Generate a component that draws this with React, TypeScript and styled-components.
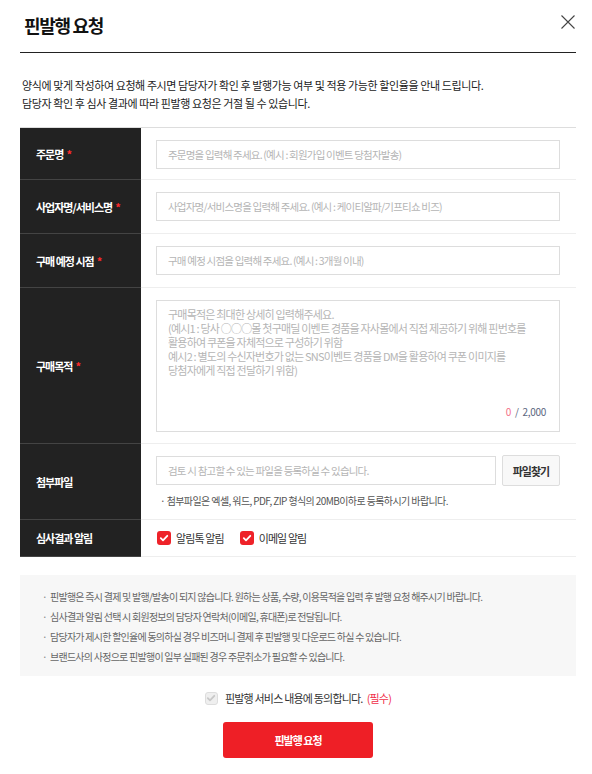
import React from "react";
import styled, { createGlobalStyle } from "styled-components";

const GlobalStyle = createGlobalStyle`
  body {
    margin: 0;
    background: #fff;
    font-family: "Noto Sans CJK KR", "Noto Sans", sans-serif;
    color: #333;
  }
  * { box-sizing: border-box; }
`;

const Modal = styled.div`
  width: 592px;
  padding: 0 16px 16px 20px;
  background: #fff;
`;

const Header = styled.header`
  height: 53px;
  display: flex;
  align-items: center;
  justify-content: space-between;
  border-bottom: 1px solid #222;
  padding: 0 0 2px 4px;
`;

const Title = styled.h1`
  margin: 0;
  font-size: 18px;
  font-weight: 700;
  letter-spacing: -1.3px;
  color: #111;
`;

const CloseButton = styled.button`
  width: 16px;
  height: 16px;
  padding: 0;
  border: 0;
  background: none;
  cursor: pointer;
  margin-top: -6px;
  display: flex;
`;

const Intro = styled.div`
  padding: 23px 0 0 2px;
  margin-bottom: 15px;
  font-size: 11px;
  line-height: 18px;
  letter-spacing: -0.4px;
  color: #222;

  p {
    margin: 0;
  }
`;

const FormTable = styled.div`
  display: grid;
  grid-template-columns: 121px 1fr;
  border-top: 1px solid #ddd;
`;

const LabelCell = styled.div`
  background: #222;
  border-bottom: 1px solid #444;
  display: flex;
  align-items: center;
  padding-left: 16px;
  color: #fff;
  font-size: 11px;
  font-weight: 700;
  letter-spacing: -1px;
`;

const Required = styled.span`
  color: #ff2a2a;
  margin-left: 3px;
`;

const ValueCell = styled.div<{ $pad?: string }>`
  border-bottom: 1px solid #eee;
  padding: ${(p) => p.$pad || "12px 16px 10px 15px"};
`;

const TextInput = styled.input`
  width: 100%;
  height: 29px;
  border: 1px solid #ddd;
  padding: 0 11px;
  font-family: inherit;
  font-size: 10.5px;
  letter-spacing: -0.8px;
  color: #333;
  outline: none;

  &::placeholder {
    color: #b5b5b5;
  }
`;

const AreaWrap = styled.div`
  position: relative;
`;

const TextArea = styled.textarea`
  display: block;
  width: 100%;
  height: 132px;
  border: 1px solid #ddd;
  padding: 6px 11px;
  resize: none;
  font-family: inherit;
  font-size: 11px;
  line-height: 14px;
  letter-spacing: -0.8px;
  outline: none;

  &::placeholder {
    color: #b5b5b5;
  }
`;

const Counter = styled.div`
  position: absolute;
  right: 14px;
  bottom: 13px;
  font-size: 10px;
  letter-spacing: -0.3px;
  color: #5b6680;
  word-spacing: 2px;

  b {
    font-weight: 400;
    color: #f47088;
  }
`;

const FileRow = styled.div`
  display: flex;
  gap: 6px;
`;

const FileButton = styled.button`
  flex: 0 0 58px;
  height: 31px;
  margin-top: -1px;
  border: 1px solid #ddd;
  border-radius: 2px;
  background: #f8f8f8;
  font-family: inherit;
  font-size: 11px;
  font-weight: 700;
  letter-spacing: -1px;
  color: #333;
`;

const FileNote = styled.p`
  margin: 8px 0 0 4px;
  font-size: 10px;
  line-height: 14px;
  letter-spacing: -0.6px;
  color: #555;
`;

const CheckGroup = styled.div`
  display: flex;
  align-items: center;
  height: 36px;
  gap: 16px;
`;

const CheckLabel = styled.label`
  display: flex;
  align-items: center;
  gap: 5px;
  font-size: 11px;
  letter-spacing: -0.9px;
  color: #333;
`;

const CheckBox = styled.span<{ $muted?: boolean }>`
  width: ${(p) => (p.$muted ? 13 : 14)}px;
  height: ${(p) => (p.$muted ? 13 : 14)}px;
  border-radius: 3px;
  display: inline-flex;
  align-items: center;
  justify-content: center;
  background: ${(p) => (p.$muted ? "#efefef" : "#ee2229")};
  border: ${(p) => (p.$muted ? "1px solid #ddd" : "0")};
`;

const Notice = styled.ul`
  margin: 18px 0 0;
  padding: 12px 20px 9px 22px;
  background: #f7f7f7;
  list-style: none;
  font-size: 10px;
  line-height: 20px;
  letter-spacing: -0.75px;
  color: #666;

  li::before {
    content: "·";
    display: inline-block;
    width: 8px;
    color: #888;
  }
`;

const Agree = styled.div`
  display: flex;
  justify-content: center;
  align-items: center;
  gap: 7px;
  margin-top: 14px;
  font-size: 11px;
  letter-spacing: -0.8px;
  color: #333;

  em {
    font-style: normal;
    color: #f0304a;
    margin-left: 4px;
  }
`;

const SubmitButton = styled.button`
  display: block;
  width: 150px;
  height: 36px;
  margin: 16px auto 0;
  border: 0;
  border-radius: 3px;
  background: #ee1f26;
  color: #fff;
  font-family: inherit;
  font-size: 11px;
  font-weight: 700;
  letter-spacing: -1px;
`;

const Check = ({ color }: { color: string }) => (
  <svg width="10" height="10" viewBox="0 0 10 10">
    <path d="M1.8 5.2 L4 7.3 L8.3 2.8" fill="none" stroke={color} strokeWidth="1.8" strokeLinecap="round" strokeLinejoin="round" />
  </svg>
);

const purposePlaceholder =
  "구매목적은 최대한 상세히 입력해주세요.\n(예시1 : 당사 ○○○몰 첫구매딜 이벤트 경품을 자사몰에서 직접 제공하기 위해 핀번호를\n활용하여 쿠폰을 자체적으로 구성하기 위함\n예시2 : 별도의 수신자번호가 없는 SNS이벤트 경품을 DM을 활용하여 쿠폰 이미지를\n당첨자에게 직접 전달하기 위함)";

export default function App() {
  return (
    <>
      <GlobalStyle />
      <Modal>
        <Header>
          <Title>핀발행 요청</Title>
          <CloseButton aria-label="닫기">
            <svg width="16" height="16" viewBox="0 0 16 16">
              <path d="M1.5 1.5 L14.5 14.5 M14.5 1.5 L1.5 14.5" stroke="#444" strokeWidth="1.1" />
            </svg>
          </CloseButton>
        </Header>

        <Intro>
          <p>양식에 맞게 작성하여 요청해 주시면 담당자가 확인 후 발행가능 여부 및 적용 가능한 할인율을 안내 드립니다.</p>
          <p>담당자 확인 후 심사 결과에 따라 핀발행 요청은 거절 될 수 있습니다.</p>
        </Intro>

        <FormTable>
          <LabelCell>
            주문명<Required>*</Required>
          </LabelCell>
          <ValueCell>
            <TextInput placeholder="주문명을 입력해 주세요. (예시 : 회원가입 이벤트 당첨자발송)" />
          </ValueCell>

          <LabelCell>
            사업자명/서비스명<Required>*</Required>
          </LabelCell>
          <ValueCell $pad="12px 16px 12px 15px">
            <TextInput placeholder="사업자명/서비스명을 입력해 주세요. (예시 : 케이티알파/기프티쇼 비즈)" />
          </ValueCell>

          <LabelCell>
            구매 예정 시점<Required>*</Required>
          </LabelCell>
          <ValueCell $pad="12px 16px 12px 15px">
            <TextInput placeholder="구매 예정 시점을 입력해 주세요. (예시 : 3개월 이내)" />
          </ValueCell>

          <LabelCell>
            구매목적<Required>*</Required>
          </LabelCell>
          <ValueCell $pad="12px 16px 11px 15px">
            <AreaWrap>
              <TextArea placeholder={purposePlaceholder} />
              <Counter>
                <b>0</b> / 2,000
              </Counter>
            </AreaWrap>
          </ValueCell>

          <LabelCell>첨부파일</LabelCell>
          <ValueCell $pad="12px 16px 11px 15px">
            <FileRow>
              <TextInput placeholder="검토 시 참고할 수 있는 파일을 등록하실 수 있습니다." readOnly />
              <FileButton>파일찾기</FileButton>
            </FileRow>
            <FileNote>· 첨부파일은 엑셀, 워드, PDF, ZIP 형식의 20MB이하로 등록하시기 바랍니다.</FileNote>
          </ValueCell>

          <LabelCell>심사결과 알림</LabelCell>
          <ValueCell $pad="0 16px 0 16px">
            <CheckGroup>
              <CheckLabel>
                <CheckBox>
                  <Check color="#fff" />
                </CheckBox>
                알림톡 알림
              </CheckLabel>
              <CheckLabel>
                <CheckBox>
                  <Check color="#fff" />
                </CheckBox>
                이메일 알림
              </CheckLabel>
            </CheckGroup>
          </ValueCell>
        </FormTable>

        <Notice>
          <li>핀발행은 즉시 결제 및 발행/발송이 되지 않습니다. 원하는 상품, 수량, 이용목적을 입력 후 발행 요청 해주시기 바랍니다.</li>
          <li>심사결과 알림 선택 시 회원정보의 담당자 연락처(이메일, 휴대폰)로 전달됩니다.</li>
          <li>담당자가 제시한 할인율에 동의하실 경우 비즈머니 결제 후 핀발행 및 다운로드 하실 수 있습니다.</li>
          <li>브랜드사의 사정으로 핀발행이 일부 실패된 경우 주문취소가 필요할 수 있습니다.</li>
        </Notice>

        <Agree>
          <CheckBox $muted>
            <Check color="#c8c8c8" />
          </CheckBox>
          <span>
            핀발행 서비스 내용에 동의합니다.<em>(필수)</em>
          </span>
        </Agree>

        <SubmitButton>핀발행 요청</SubmitButton>
      </Modal>
    </>
  );
}
